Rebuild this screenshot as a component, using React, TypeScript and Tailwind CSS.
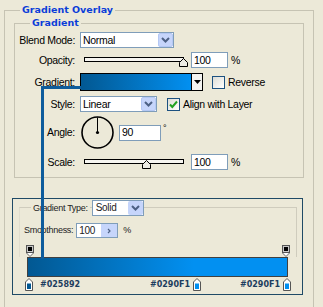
import React from 'react'

const BG = 'bg-[#ECE9D8]'

function Chevron() {
  return (
    <svg width="9" height="6" viewBox="0 0 9 6" fill="none">
      <path d="M1 1l3.5 3.5L8 1" stroke="#4d6185" strokeWidth="2" />
    </svg>
  )
}

function Select({ value, width }: { value: string; width: string }) {
  return (
    <div className={`${width} h-[16px] flex items-center bg-white border border-[#7f9db9]`}>
      <span className="flex-1 pl-[2px] leading-none">{value}</span>
      <div className="w-[15px] h-[14px] flex items-center justify-center rounded-[2px] bg-[#c6d5fb] border border-[#b4c8f4]">
        <Chevron />
      </div>
    </div>
  )
}

function Thumb() {
  return (
    <svg width="9" height="9" viewBox="0 0 9 9">
      <path d="M4.5 0.5L8.5 4.5V8.5H0.5V4.5Z" fill="#ecebe4" stroke="#000" />
    </svg>
  )
}

function Slider({ pos }: { pos: number }) {
  return (
    <div className="relative ml-[9px] w-[103px] h-[16px]">
      <div className="absolute left-0 top-[5px] w-[100px] h-[5px] border border-black bg-[#f6f5f0]" />
      <div className="absolute top-[6px]" style={{ left: pos }}>
        <Thumb />
      </div>
    </div>
  )
}

function Input({ value, width }: { value: string; width: string }) {
  return (
    <div className={`${width} h-[16px] flex items-center bg-white border border-[#7f9db9] pl-[2px] leading-none`}>
      {value}
    </div>
  )
}

function Checkbox({ checked }: { checked?: boolean }) {
  return (
    <div className="w-[13px] h-[13px] border border-[#1c5180] bg-gradient-to-br from-[#dcdcd5] to-white flex items-center justify-center">
      {checked && (
        <svg width="9" height="9" viewBox="0 0 9 9" fill="none">
          <path d="M1 4.5l2.3 2.5L8 1.5" stroke="#21a121" strokeWidth="2" />
        </svg>
      )}
    </div>
  )
}

function Label({ children }: { children: React.ReactNode }) {
  return <div className="w-[60px] text-right shrink-0 leading-none">{children}</div>
}

function TopStop() {
  return (
    <svg width="8" height="12" viewBox="0 0 8 12">
      <rect x="0.5" y="0.5" width="7" height="7" fill="#c8c8c8" stroke="#555" />
      <rect x="2" y="2" width="4" height="4" fill="#000" />
      <path d="M0.5 8L4 11.5L7.5 8" fill="#fff" stroke="#666" />
    </svg>
  )
}

function BottomStop({ color }: { color: string }) {
  return (
    <svg width="8" height="13" viewBox="0 0 8 13">
      <path d="M4 0.5L7.5 4V12.5H0.5V4Z" fill="#fff" stroke="#555" />
      <rect x="2" y="5.5" width="4" height="5.5" fill={color} />
    </svg>
  )
}

export default function App() {
  return (
    <div
      className={`relative w-[323px] h-[307px] overflow-hidden ${BG} text-black text-[10.5px] tracking-[-0.3px] font-['Liberation_Sans',Arial,sans-serif]`}
    >
      {/* Outer group */}
      <div className="ml-[4px] mt-[10px] w-[310px] h-[320px] border-t border-l border-r border-[#c6c3b3]">
        <div className={`-mt-[7px] ml-[15px] w-fit px-[2px] ${BG} font-['DejaVu_Sans',sans-serif] font-bold text-[9.5px] tracking-[0px] leading-[12px] text-[#0a3dd8]`}>
          Gradient Overlay
        </div>

        {/* Gradient group */}
        <div className="ml-[9px] mt-[7px] w-[290px] h-[155px] border border-[#c6c3b3]">
          <div className={`-mt-[7px] ml-[15px] w-fit px-[2px] ${BG} font-['DejaVu_Sans',sans-serif] font-bold text-[9.5px] tracking-[0px] leading-[12px] text-[#0a3dd8]`}>
            Gradient
          </div>

          <div className="flex items-center h-[16px] mt-[3px]">
            <Label>Blend Mode:</Label>
            <div className="ml-[5px]">
              <Select value="Normal" width="w-[94px]" />
            </div>
          </div>

          <div className="flex items-center h-[16px] mt-[4px]">
            <Label>Opacity:</Label>
            <Slider pos={95} />
            <div className="ml-[4px]">
              <Input value="100" width="w-[37px]" />
            </div>
            <span className="ml-[3px] leading-none">%</span>
          </div>

          <div className="flex items-center h-[18px] mt-[5px]">
            <Label>Gradient:</Label>
            <div className="ml-[5px] w-[123px] h-[18px] flex border border-black">
              <div className="flex-1 bg-gradient-to-r from-[#025892] to-[#0290F1]" />
              <div className="w-[11px] border-l border-black bg-[#f3f3f0] flex items-center justify-center">
                <svg width="7" height="4" viewBox="0 0 7 4">
                  <path d="M0 0h7L3.5 4z" fill="#000" />
                </svg>
              </div>
            </div>
            <div className="ml-[9px]">
              <Checkbox />
            </div>
            <span className="ml-[3px] leading-none">Reverse</span>
          </div>

          <div className="flex items-center h-[16px] mt-[5px]">
            <Label>Style:</Label>
            <div className="ml-[5px]">
              <Select value="Linear" width="w-[77px]" />
            </div>
            <div className="ml-[10px]">
              <Checkbox checked />
            </div>
            <span className="ml-[3px] leading-none">Align with Layer</span>
          </div>

          <div className="flex items-center h-[33px] mt-[4px]">
            <Label>Angle:</Label>
            <svg className="ml-[6px]" width="33" height="33" viewBox="0 0 33 33" fill="none">
              <circle cx="16.5" cy="16.5" r="15.5" stroke="#000" strokeWidth="1.6" />
              <path d="M16.5 16.5V1.5" stroke="#000" strokeWidth="1" />
              <circle cx="16.5" cy="16.5" r="1.6" fill="#000" />
            </svg>
            <div className="ml-[5px]">
              <Input value="90" width="w-[42px]" />
            </div>
            <span className="ml-[2px] self-start mt-[8px] text-[9px] leading-none">°</span>
          </div>

          <div className="flex items-center h-[16px] mt-[5px]">
            <Label>Scale:</Label>
            <Slider pos={58} />
            <div className="ml-[4px]">
              <Input value="100" width="w-[37px]" />
            </div>
            <span className="ml-[3px] leading-none">%</span>
          </div>
        </div>

        {/* Gradient editor */}
        <div className="ml-[7px] mt-[20px] w-[291px] h-[97px] border border-[#1f4a66] text-[9px] tracking-[-0.3px] text-[#222]">
          <div className="ml-[6px] mt-[8px] w-[278px] h-[50px] border-t border-l border-r border-t-[#cfccbd] border-r-[#cfccbd] border-l-[#e0ddce] relative">
            <div className="flex items-center -mt-[8px] ml-[11px]">
              <span className={`px-[2px] ${BG} leading-none`}>Gradient Type:</span>
              <div className="ml-[2px]">
                <div className="w-[52px] h-[16px] flex items-center bg-white border border-[#7f9db9] text-[10px]">
                  <span className="flex-1 pl-[3px] leading-none">Solid</span>
                  <div className="w-[15px] h-[14px] flex items-center justify-center rounded-[2px] bg-[#c6d5fb]">
                    <Chevron />
                  </div>
                </div>
              </div>
            </div>

            <div className="flex items-center mt-[7px] ml-[4px] h-[15px]">
              <span className="leading-none">Smoothness:</span>
              <div className="ml-[3px] w-[42px] h-[15px] flex items-center bg-white border border-[#7f9db9] text-[10px]">
                <span className="flex-1 pl-[2px] leading-none">100</span>
                <div className="w-[16px] h-[13px] flex items-center justify-center bg-[#c6d5fb]">
                  <svg width="4" height="6" viewBox="0 0 4 6" fill="none">
                    <path d="M1 1l2 2-2 2" stroke="#4d6185" strokeWidth="1.2" />
                  </svg>
                </div>
              </div>
              <span className="ml-[5px] leading-none">%</span>
            </div>

            <div className="absolute left-[6px] top-[37px]">
              <TopStop />
            </div>
            <div className="absolute left-[262px] top-[37px]">
              <TopStop />
            </div>
          </div>

          <div className="ml-[14px] w-[261px] h-[20px] border border-[#404040] bg-[linear-gradient(to_right,#025892_0%,#0290F1_64%,#0290F1_100%)]" />

          <div className="relative h-[14px] font-['DejaVu_Sans',sans-serif] font-bold text-[8px] tracking-[0px] text-[#1d3d5d]">
            <div className="absolute left-[12px] top-[1px]">
              <BottomStop color="#025892" />
            </div>
            <span className="absolute left-[27px] top-[4px] leading-none">#025892</span>
            <span className="absolute left-[137px] top-[4px] leading-none">#0290F1</span>
            <div className="absolute left-[180px] top-[1px]">
              <BottomStop color="#0290F1" />
            </div>
            <span className="absolute left-[227px] top-[4px] leading-none">#0290F1</span>
            <div className="absolute left-[270px] top-[1px]">
              <BottomStop color="#0290F1" />
            </div>
          </div>
        </div>
      </div>

      {/* Callout line */}
      <div className="absolute left-[41px] top-[86px] w-[40px] h-[3px] bg-[#0e5c9c]" />
      <div className="absolute left-[41px] top-[86px] w-[3px] h-[173px] bg-[#0e5c9c]" />
    </div>
  )
}
